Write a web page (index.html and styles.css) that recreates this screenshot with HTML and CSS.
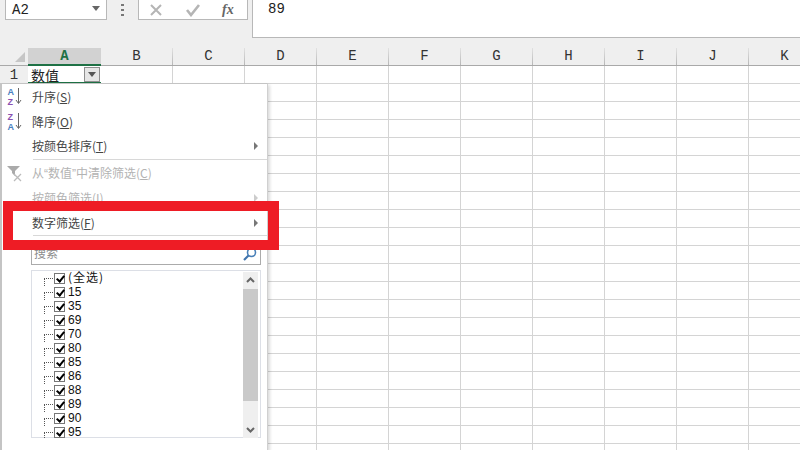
FILE: index.html
```html
<!DOCTYPE html>
<html lang="zh">
<head>
<meta charset="utf-8">
<title>Excel 筛选</title>
<link rel="stylesheet" href="styles.css">
</head>
<body>
<div class="app">
  <div class="ribbon">
    <div class="namebox"><span>A2</span><i class="caret"></i></div>
    <div class="dots"><i></i><i></i><i></i></div>
    <div class="fbuttons">
      <svg class="ficon" width="14" height="14" viewBox="0 0 14 14"><path d="M2 2l10 10M12 2L2 12" stroke="#b5b5b5" stroke-width="2" fill="none"/></svg>
      <svg class="ficon" width="16" height="14" viewBox="0 0 16 14"><path d="M2 7l4 5 8-10" stroke="#b5b5b5" stroke-width="2.6" fill="none"/></svg>
      <span class="fx">fx</span>
    </div>
    <div class="formula">89</div>
  </div>
  <div class="colhead">
    <div class="corner"><i></i></div>
    <div class="col active">A</div>
    <div class="col">B</div><div class="col">C</div><div class="col">D</div><div class="col">E</div>
    <div class="col">F</div><div class="col">G</div><div class="col">H</div><div class="col">I</div>
    <div class="col">J</div><div class="col">K</div>
  </div>
  <div class="row1">
    <div class="rownum">1</div>
    <div class="a1"><span>数值</span>
      <div class="filterbtn"><i></i></div>
    </div>
    <div class="rest"></div>
  </div>
  <div class="grid"></div>
</div>

<div class="menu">
  <div class="item">
    <svg class="micon" width="18" height="18" viewBox="0 0 18 18"><text x="1.5" y="6.5" class="ia">A</text><text x="1.5" y="17" class="iz">Z</text><path d="M12.5 0v15M10 12l2.5 3.5 2.5-3.5" stroke="#666" fill="none"/></svg>
    <span>升序(<u>S</u>)</span>
  </div>
  <div class="item">
    <svg class="micon" width="18" height="18" viewBox="0 0 18 18"><text x="1.5" y="6.5" class="iz">Z</text><text x="1.5" y="17" class="ia">A</text><path d="M12.5 0v15M10 12l2.5 3.5 2.5-3.5" stroke="#666" fill="none"/></svg>
    <span>降序(<u>O</u>)</span>
  </div>
  <div class="item"><span>按颜色排序(<u>T</u>)</span><i class="arrow"></i></div>
  <div class="sep"></div>
  <div class="item off">
    <svg class="micon" width="18" height="18" viewBox="0 0 18 18"><path d="M1 1h13L9 6v5L6 8V6z" fill="#aaa"/><path d="M8 9l7 7M15 9l-7 7" stroke="#bbb" stroke-width="1.3"/></svg>
    <span>从<span class="q">“</span>数值<span class="q">”</span>中清除筛选(<u>C</u>)</span>
  </div>
  <div class="item off"><span>按颜色筛选(<u>I</u>)</span><i class="arrow"></i></div>
  <div class="item"><span>数字筛选(<u>F</u>)</span><i class="arrow"></i></div>
  <div class="sep tight"></div>
  <div class="search">
    <span>搜索</span>
    <svg width="14" height="14" viewBox="0 0 14 14"><circle cx="8.5" cy="5.5" r="4" fill="none" stroke="#4a80b8" stroke-width="1.6"/><path d="M5.5 8.5L1 13" stroke="#3f74ad" stroke-width="2.2"/></svg>
  </div>
  <div class="listbox">
    <div class="list">
      <div class="opt"><b class="cb"></b><span class="all">(全选)</span></div>
      <div class="opt"><b class="cb"></b><span>15</span></div>
      <div class="opt"><b class="cb"></b><span>35</span></div>
      <div class="opt"><b class="cb"></b><span>69</span></div>
      <div class="opt"><b class="cb"></b><span>70</span></div>
      <div class="opt"><b class="cb"></b><span>80</span></div>
      <div class="opt"><b class="cb"></b><span>85</span></div>
      <div class="opt"><b class="cb"></b><span>86</span></div>
      <div class="opt"><b class="cb"></b><span>88</span></div>
      <div class="opt"><b class="cb"></b><span>89</span></div>
      <div class="opt"><b class="cb"></b><span>90</span></div>
      <div class="opt"><b class="cb"></b><span>95</span></div>
    </div>
    <div class="scroll">
      <svg width="15" height="17" viewBox="0 0 15 17"><path d="M4 10l3.5-3.5L11 10" stroke="#666" stroke-width="2" fill="none"/></svg>
      <div class="thumb"></div>
      <svg class="down" width="15" height="17" viewBox="0 0 15 17"><path d="M4 7l3.5 3.5L11 7" stroke="#666" stroke-width="2" fill="none"/></svg>
    </div>
  </div>
</div>
<div class="callout"></div>
</body>
</html>
```
FILE: styles.css
```css
* { box-sizing: border-box; }
html, body { margin: 0; padding: 0; }
body { width: 800px; height: 450px; overflow: hidden; background: #fff; font-family: "Noto Sans CJK SC", "Noto Sans", sans-serif; position: relative; }
.app { display: flex; flex-direction: column; height: 450px; overflow: hidden; }

.ribbon { height: 48px; background: #efefef; display: flex; align-items: flex-start; padding-left: 5px; flex: none; }
.namebox { width: 102px; height: 20px; background: #fff; border: 1px solid #b8b8b8; border-top: 0; display: flex; align-items: center; justify-content: space-between; padding: 0 6px 0 6px; font: 14px/18px "Liberation Mono", monospace; color: #222; }
.caret { width: 0; height: 0; border: 4px solid transparent; border-top: 5px solid #666; border-bottom: 0; margin-bottom: 3px; }
.dots { width: 31px; height: 20px; display: flex; flex-direction: column; align-items: center; justify-content: center; gap: 3px; }
.dots i { width: 3px; height: 2px; background: #777; }
.fbuttons { width: 110px; height: 20px; background: #fff; border: 1px solid #b8b8b8; border-top: 0; display: flex; align-items: center; gap: 22px; padding-left: 10px; }
.ficon { flex: none; }
.fx { font: italic bold 14px/16px "Liberation Serif", serif; color: #666; margin-left: -1px; }
.formula { margin-left: 4px; flex: 1; height: 38px; background: #fff; border: 1px solid #b8b8b8; border-top: 0; border-right: 0; padding: 1px 15px; font: 14px/16px "Liberation Mono", monospace; color: #222; }

.colhead { display: flex; height: 18px; background: #efefef; border-bottom: 1px solid #a9a9a9; flex: none; }
.corner { width: 28px; flex: none; display: flex; justify-content: flex-end; align-items: flex-end; padding: 0 3px 3px 0; }
.corner i { width: 0; height: 0; border-style: solid; border-width: 0 0 10px 10px; border-color: transparent transparent #c6c6c6 transparent; }
.col { width: 72px; flex: none; text-align: center; font: 14px/17px "Liberation Mono", monospace; color: #333; border-right: 1px solid; border-image: linear-gradient(#e4e4e4, #b4b4b4) 1; }
.col.active { width: 73px; background: #d2d2d2; color: #1e7145; font-weight: bold; border-bottom: 2px solid #1e7145; height: 18px; line-height: 16px; border-right: 0; border-image: none; }

.row1 { display: flex; height: 18px; flex: none; }
.rownum { width: 28px; flex: none; background: #efefef; border-bottom: 1px solid #d4d4d4; text-align: center; font: 14px/19px "Liberation Mono", monospace; color: #333; }
.a1 { width: 73px; flex: none; border-bottom: 2px solid #1e7145; display: flex; justify-content: space-between; padding-left: 3px; padding-right: 1px; }
.a1 span { font-size: 14px; line-height: 18px; color: #222; font-weight: 400; }
.filterbtn { width: 16px; height: 15px; margin-top: 1px; background: #e6e6e6; border: 1px solid #8e8e8e; display: flex; align-items: center; justify-content: center; }
.filterbtn i { width: 0; height: 0; border: 4px solid transparent; border-top: 5px solid #555; border-bottom: 0; }
.rest { flex: 1; border-bottom: 1px solid #d4d4d4; background: linear-gradient(to right, #d4d4d4 1px, transparent 1px) 71px 0 / 72px 100%; }
.grid { flex: 1; background-image:
    linear-gradient(to right, transparent 28px, #d4d4d4 28px, #d4d4d4 29px, transparent 29px),
    linear-gradient(to bottom, transparent 17px, #d4d4d4 17px, #d4d4d4 18px);
  background-size: 72px 100%, 100% 18px; }

.menu { position: absolute; left: 0; top: 83px; width: 268px; height: 367px; background: #fff; border: 1px solid #c4c4c4; border-left-width: 2px; border-bottom: 0; border-right-color: #d0d0d0; box-shadow: 2px 2px 3px rgba(0,0,0,.14); font-size: 12px; color: #444; display: flex; flex-direction: column; padding-top: 1px; }
.item { height: 24.5px; flex: none; display: flex; align-items: center; padding-left: 30px; position: relative; line-height: 16px; }
.item.off { color: #b3b3b3; }
.q { font-family: "Liberation Sans", sans-serif; }
.micon { position: absolute; left: 4px; top: 3px; }
.ia { font: bold 9px "Liberation Sans", sans-serif; fill: #4a80c0; }
.iz { font: bold 9px "Liberation Sans", sans-serif; fill: #8a4fb0; }
.arrow { position: absolute; right: 9px; top: 8px; width: 0; height: 0; border: 4px solid transparent; border-left: 4px solid #777; border-right: 0; }
.off .arrow { border-left-color: #ccc; }
.sep { height: 1px; background: #d8d8d8; margin: 0 0 2px 31px; flex: none; }
.sep.tight { margin: 0 0 4px 31px; }
.search { margin-left: 29px; width: 230px; height: 25px; border: 1px solid #ababab; display: flex; align-items: flex-end; justify-content: space-between; padding: 0 3px 3px 2px; color: #8c8c8c; line-height: 17px; flex: none; }
.listbox { margin: 5px 0 0 29px; width: 230px; height: 168px; border: 1px solid #dcdfe6; display: flex; flex: none; }
.list { flex: 1; }
.opt { height: 14px; display: flex; align-items: center; padding-left: 22px; position: relative; color: #111; font: 12px/14px "Liberation Sans", sans-serif; }
.opt::before { content: ""; position: absolute; left: 12px; top: 7px; width: 10px; height: 7px; border-left: 1px dotted #555; border-top: 1px dotted #555; }
.opt:last-child::before { height: 5px; }
.cb { width: 11px; height: 11px; border: 1px solid #777; background: #fff; position: relative; margin-right: 3px; flex: none; }
.cb::after { content: ""; position: absolute; left: 3px; top: 0; width: 3px; height: 6px; border: solid #000; border-width: 0 2px 2px 0; transform: rotate(40deg); }
.all { font-family: "Noto Sans CJK SC", sans-serif; letter-spacing: 1px; line-height: 14px; margin-top: -2px; }
.scroll { width: 15px; margin: 1px 2px 0 0; height: 166px; background: #efefef; display: flex; flex-direction: column; }
.scroll svg { display: block; flex: none; }
.thumb { height: 112px; background: #c9c9c9; flex: none; }
.down { margin-top: auto; }

.callout { position: absolute; left: 3px; top: 201px; width: 276px; height: 49px; border: 10px solid #ee1c25; border-right-width: 11px; }
```
